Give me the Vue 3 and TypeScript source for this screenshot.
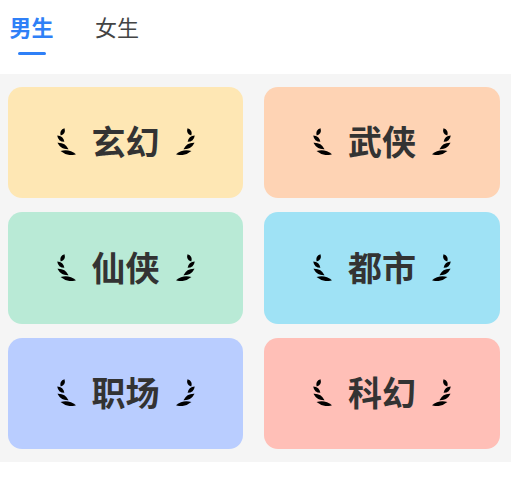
<script setup lang="ts">
interface Genre { name: string; color: string }
const genres: Genre[] = [
  { name: '玄幻', color: '#fee7b4' },
  { name: '武侠', color: '#fed3b4' },
  { name: '仙侠', color: '#b9ead6' },
  { name: '都市', color: '#9fe2f5' },
  { name: '职场', color: '#b9cdff' },
  { name: '科幻', color: '#ffbfb7' },
]
const lens = (cx: number, cy: number, l: number, w: number, a: number) => ({
  d: `M${-l} 0 Q0 ${-w * 2} ${l} 0 Q0 ${w * 2} ${-l} 0 Z`,
  t: `translate(${cx} ${cy}) rotate(${a})`,
})
const leaves = [
  lens(5.6, 3.8, 4.1, 2, -62),
  lens(3.8, 10.6, 4.8, 2, 42),
  lens(6, 18, 6.4, 2.1, 30),
  lens(11.3, 24.7, 7.9, 2.1, 12),
]
</script>

<template>
  <div class="page">
    <header class="tabs">
      <div class="tab active">男生<span class="bar"></span></div>
      <div class="tab">女生</div>
    </header>
    <main class="grid">
      <div v-for="g in genres" :key="g.name" class="card" :style="{ background: g.color }">
        <svg class="wing" viewBox="0 0 19 27">
          <path v-for="l in leaves" :key="l.t" :d="l.d" :transform="l.t" />
        </svg>
        <span class="label">{{ g.name }}</span>
        <svg class="wing flip" viewBox="0 0 19 27">
          <path v-for="l in leaves" :key="l.t" :d="l.d" :transform="l.t" />
        </svg>
      </div>
    </main>
  </div>
</template>

<style scoped>
.page {
  width: 511px;
  font-family: "Noto Sans CJK SC", "Noto Sans", sans-serif;
}
.tabs {
  height: 74px;
  display: flex;
  gap: 41.5px;
  padding-left: 9.5px;
  box-sizing: border-box;
  background: #fff;
}
.tab {
  position: relative;
  width: 44px;
  font-size: 22px;
  line-height: 28px;
  padding-top: 12px;
  color: #444;
  white-space: nowrap;
}
.tab.active {
  color: #2f80f7;
  font-weight: 700;
}
.bar {
  position: absolute;
  left: 8px;
  top: 52px;
  width: 28px;
  height: 3px;
  border-radius: 2px;
  background: #2f80f7;
}
.grid {
  display: grid;
  grid-template-columns: 235px 236px;
  grid-auto-rows: 111.5px;
  column-gap: 21px;
  row-gap: 14px;
  padding: 12.75px 11px 12px 8px;
  height: 388px;
  box-sizing: border-box;
  background: #f5f5f5;
}
.card {
  display: flex;
  align-items: center;
  justify-content: center;
  gap: 16px;
  padding-bottom: 2px;
  box-sizing: border-box;
  border-radius: 14px;
}
.label {
  font-size: 34px;
  line-height: 40px;
  padding-bottom: 1px;
  font-weight: 700;
  color: #333;
}
.wing {
  width: 19px;
  height: 27px;
  fill: #000;
}
.flip {
  transform: scaleX(-1);
}
</style>
